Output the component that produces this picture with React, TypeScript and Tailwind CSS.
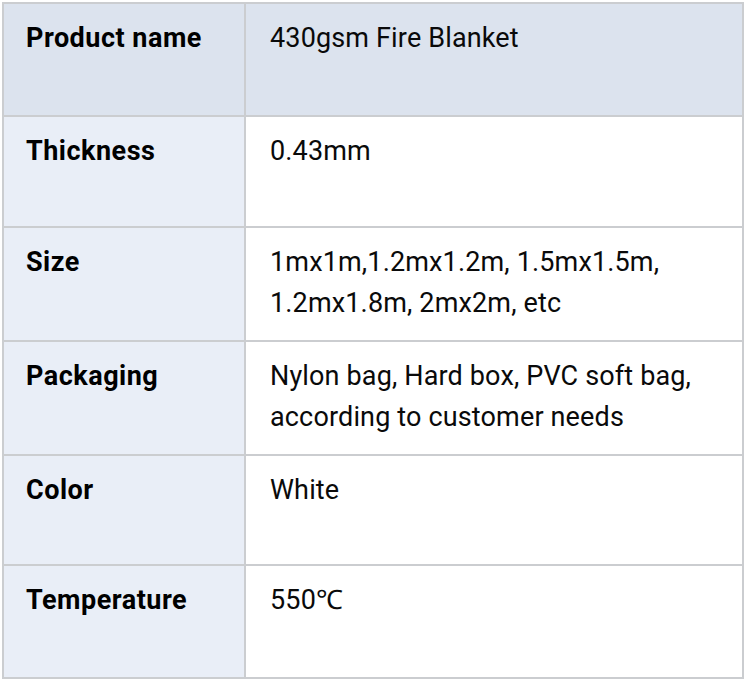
import React from "react";

const rows: { label: string; value: React.ReactNode; h: string; head?: boolean }[] = [
  { label: "Product name", value: "430gsm Fire Blanket", h: "h-[113px]", head: true },
  { label: "Thickness", value: "0.43mm", h: "h-[111px]" },
  { label: "Size", value: <>1mx1m,1.2mx1.2m, 1.5mx1.5m,<br />1.2mx1.8m, 2mx2m, etc</>, h: "h-[114px]" },
  { label: "Packaging", value: <>Nylon bag, Hard box, PVC soft bag,<br />according to customer needs</>, h: "h-[114px]" },
  { label: "Color", value: "White", h: "h-[110px]" },
  { label: "Temperature", value: "550℃", h: "h-[113px]" },
];

export default function App() {
  return (
    <div className="w-[747px] h-[682px] bg-white pl-[2px] pt-[2px]" style={{ fontFamily: "Roboto, 'Noto Sans', sans-serif" }}>
      <div className="w-[742px] border-t-2 border-l-2 border-r-2 border-[#cbcdd0] text-[27px] leading-[41px] text-[#0a0a0a]">
        {rows.map((r, i) => (
          <div key={i} className={`flex ${r.h} border-b-2 border-[#cbcdd0]`}>
            <div className={`w-[242px] shrink-0 border-r-2 border-[#cbcdd0] pl-[22px] pt-[14px] font-bold tracking-[0.5px] text-black ${r.head ? "bg-[#dce3ee]" : "bg-[#e9eef7]"}`}>
              {r.label}
            </div>
            <div className={`flex-1 pl-[24px] pt-[14px] tracking-[0.15px] ${r.head ? "bg-[#dce3ee]" : "bg-white"}`}>{r.value}</div>
          </div>
        ))}
      </div>
    </div>
  );
}
